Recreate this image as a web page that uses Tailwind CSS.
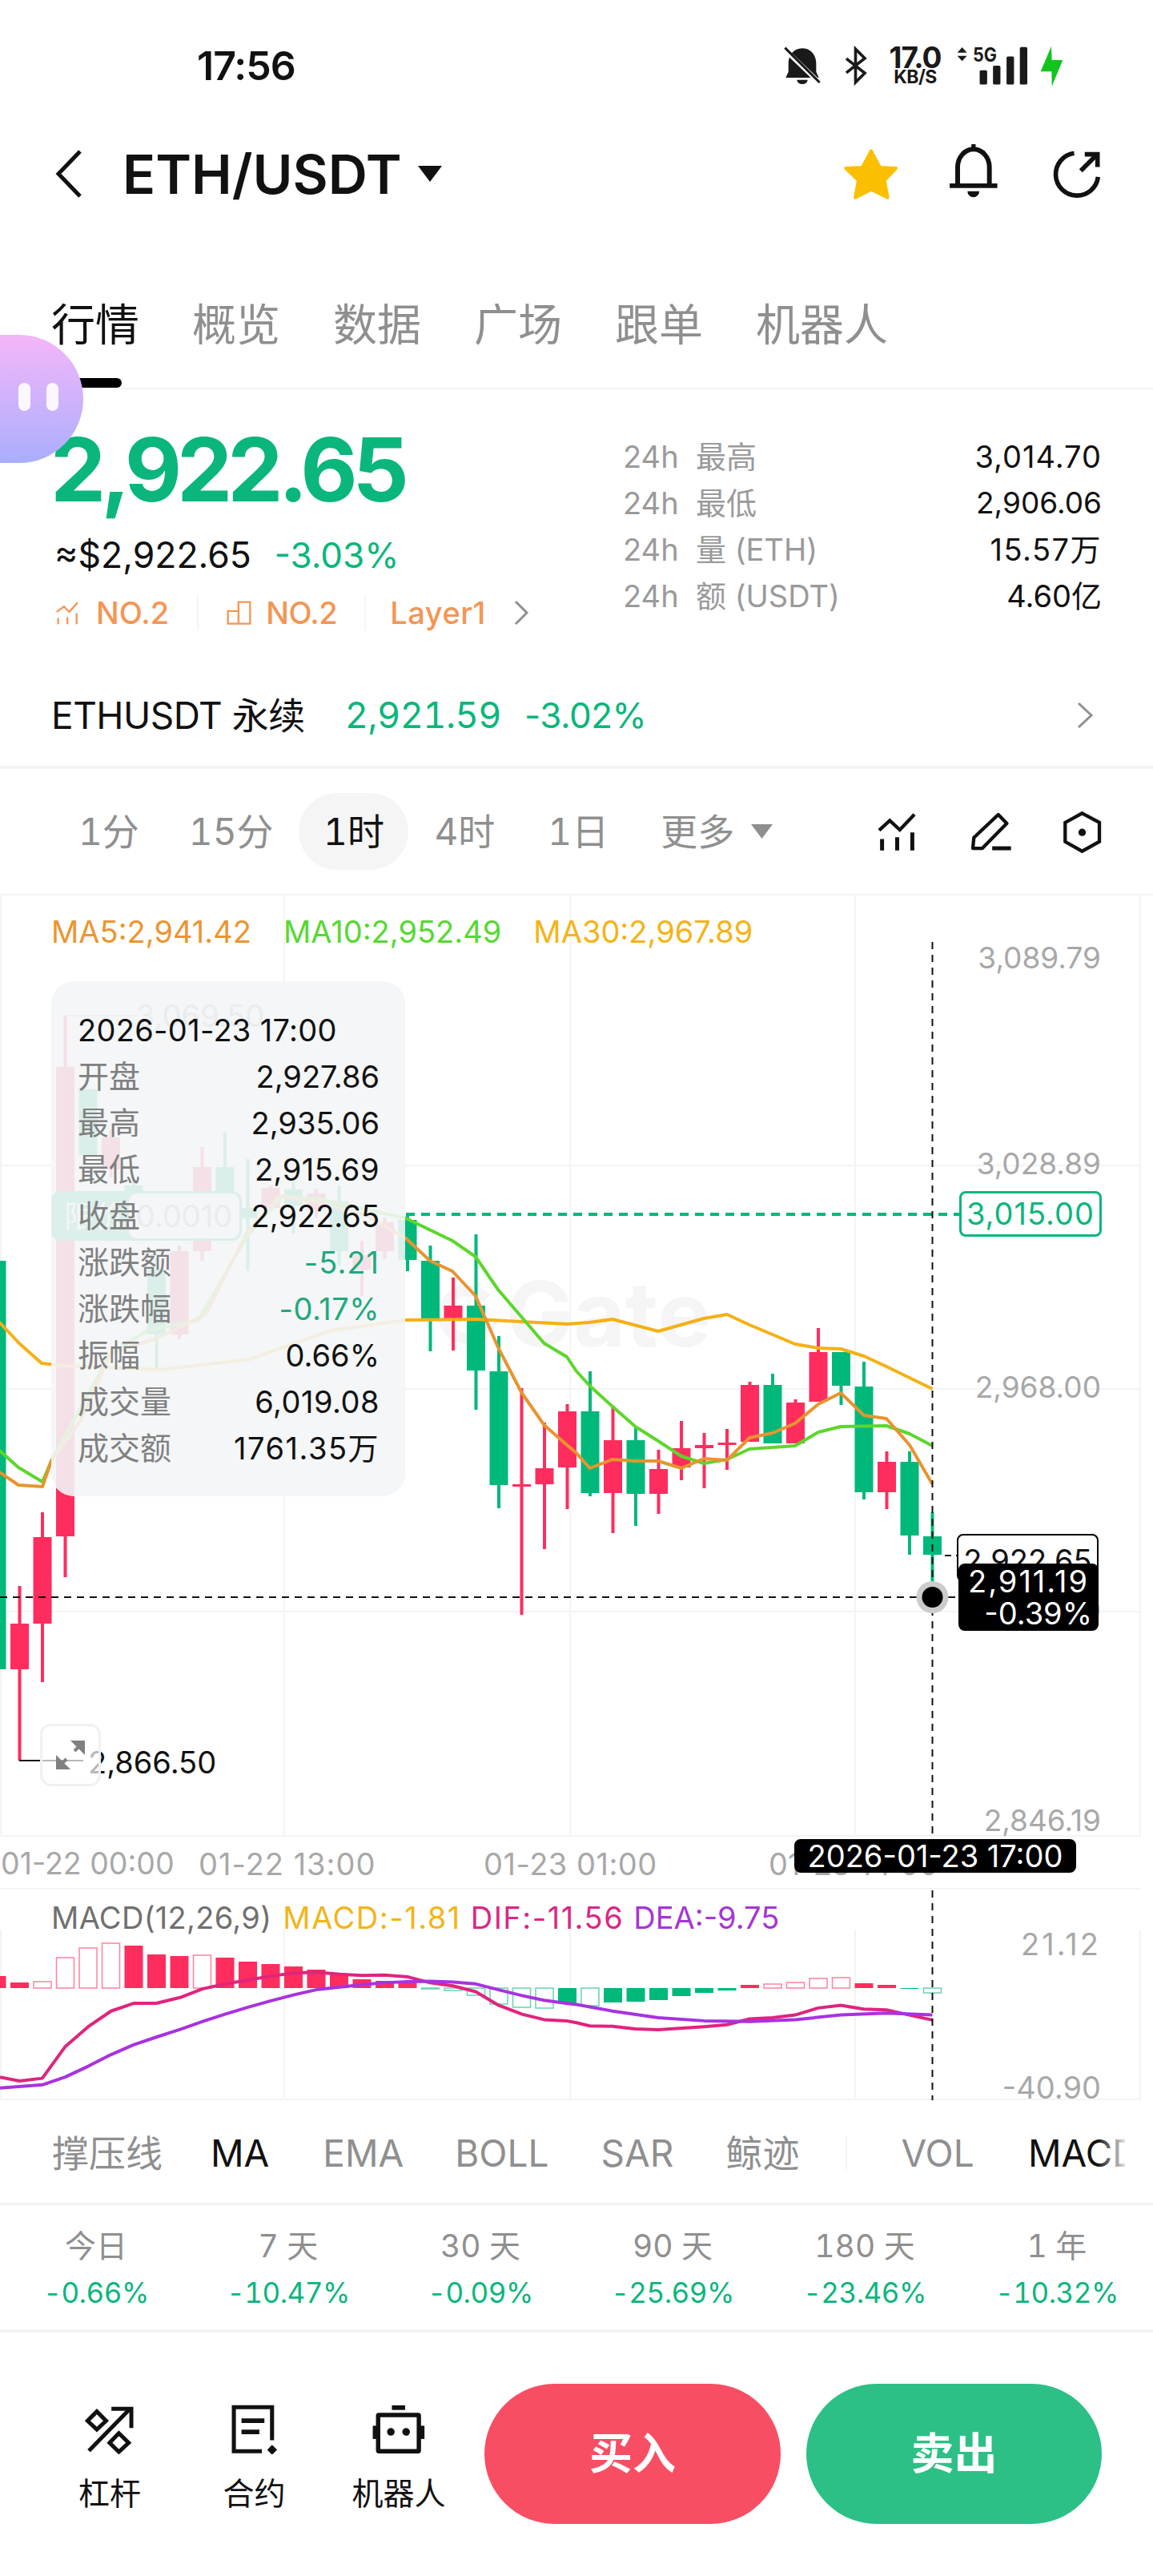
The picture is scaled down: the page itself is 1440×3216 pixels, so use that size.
<!DOCTYPE html>
<html lang="zh-CN">
  <head>
    <meta charset="UTF-8" />
    <title>ETH/USDT</title>
    <script src="https://cdn.jsdelivr.net/npm/@tailwindcss/browser@4"></script>
  </head>
  <body class="bg-white text-black w-[1440px] h-[3216px] overflow-hidden relative font-['Inter','Noto_Sans_CJK_SC',sans-serif]">
    <!-- Status bar -->
    <div class="h-[164px] flex items-center pl-[246px] pr-[112px]">
      <span class="text-[50px] font-semibold leading-none tracking-[-1px] text-[#111]">17:56</span>
      <div class="ml-auto flex items-center">
        <svg width="50" height="50" viewBox="50 50 150 150" fill="#1a1a1a">
          <path d="M125 60c-32 0-52 26-52 56v32l-10 22h124l-10-22v-32c0-30-20-56-52-56z" />
          <path d="M105 178h40a20 16 0 0 1-40 0z" />
          <path d="M55 60L190 190" stroke="#fff" stroke-width="18" />
          <path d="M60 58L190 188" stroke="#1a1a1a" stroke-width="9" />
        </svg>
        <svg class="ml-[25px]" width="33" height="50" viewBox="265 50 100 150" fill="none" stroke="#1a1a1a" stroke-width="11">
          <path d="M280 98L350 153 315 188V62L350 97 280 152" />
        </svg>
        <div class="ml-[25px] w-[66px] flex flex-col items-center text-[#1a1a1a] font-bold">
          <span class="text-[37px] leading-[29px] tracking-[-1px]">17.0</span>
          <span class="text-[23px] leading-[21px] tracking-[-0.5px]">KB/S</span>
        </div>
        <svg class="ml-[17px]" width="93" height="50" viewBox="700 50 280 150" fill="#1a1a1a">
          <path d="M726 56l18 20h-36zM726 108l18-20h-36z" />
          <text x="766" y="110" font-size="72" font-weight="700" textLength="90" lengthAdjust="spacingAndGlyphs">5G</text>
          <rect x="792" y="142" width="28" height="54" rx="5" />
          <rect x="842" y="125" width="28" height="71" rx="5" />
          <rect x="893" y="90" width="28" height="106" rx="5" />
          <rect x="943" y="55" width="28" height="141" rx="5" />
        </svg>
        <svg class="ml-[12px]" width="30" height="52" viewBox="1015 50 90 156" fill="#14c41e">
          <path d="M1060 55L1020 150H1061L1062 205L1103 107H1062Z" />
        </svg>
      </div>
    </div>

    <!-- Header -->
    <div class="h-[106px] flex items-center pl-[68px] pr-[62px]">
      <svg width="36" height="60" viewBox="0 0 36 60" fill="none" stroke="#111" stroke-width="5">
        <path d="M32 2L5 30L32 58" />
      </svg>
      <span class="ml-[49px] text-[68px] font-semibold leading-none text-[#111]">ETH/USDT</span>
      <svg class="ml-[20px]" width="30" height="20" viewBox="0 0 30 20" fill="#111"><path d="M0 0H30L15 20Z" /></svg>
      <div class="ml-auto flex items-center">
        <svg width="70" height="65" viewBox="40 40 210 195" fill="#fcbf00" stroke="#fcbf00" stroke-width="12" stroke-linejoin="round">
          <path d="M145 50L178 112 238 115 195 160 207 225 145 195 85 225 97 160 50 115 112 112Z" />
        </svg>
        <svg class="ml-[62px]" width="63" height="76" viewBox="435 35 190 230">
          <path d="M468 195V125a60 68 0 0 1 120 0V195" fill="none" stroke="#111" stroke-width="18" />
          <path d="M438 195H618" stroke="#111" stroke-width="18" />
          <rect x="520" y="38" width="16" height="20" fill="#111" />
          <path d="M505 216h45a22 22 0 0 1-45 0z" fill="#111" />
        </svg>
        <svg class="ml-[67px]" width="63" height="63" viewBox="820 50 190 190" fill="none" stroke="#111" stroke-width="17">
          <path d="M900 66A80 80 0 1 0 990 155" />
          <path d="M925 132L985 72" />
          <path d="M940 70H988V118" />
        </svg>
      </div>
    </div>

    <!-- Tabs -->
    <div class="relative h-[216px] pt-[108px] pl-[64px] border-b-2 border-[#f3f3f3]">
      <div class="flex gap-[66px] text-[55px] leading-[54px] text-[#8f8f8f]">
        <span class="text-[#111]">行情</span>
        <span>概览</span>
        <span>数据</span>
        <span>广场</span>
        <span>跟单</span>
        <span>机器人</span>
      </div>
      <div class="absolute left-[88px] bottom-0 w-[64px] h-[12px] rounded-full bg-black"></div>
    </div>

    <!-- Floating assistant bubble -->
    <div class="absolute left-0 top-[418px] w-[104px] h-[160px] rounded-r-[80px] bg-gradient-to-b from-[#f4b6f9] to-[#a9aefd] z-20">
      <div class="absolute left-[23px] top-[60px] w-[15px] h-[35px] rounded-full bg-white/90"></div>
      <div class="absolute left-[58px] top-[60px] w-[15px] h-[35px] rounded-full bg-white/90"></div>
    </div>

    <!-- Price summary -->
    <div class="h-[344px] flex">
      <div class="w-[778px] pl-[68px] pt-[44px]">
        <div class="-ml-[5px] text-[110px] font-bold leading-[112px] tracking-[-6px] text-[#0ab67b]">2,922.65</div>
        <div class="mt-[26px] flex items-center h-[50px] text-[44.5px] leading-none">
          <span class="text-[#111]">≈$2,922.65</span>
          <span class="ml-[29px] text-[44px] text-[#0ab67b]">-3.03%</span>
        </div>
        <div class="mt-[22px] flex items-center h-[50px] text-[38px] leading-none font-medium text-[#f59554]">
          <svg width="32" height="33" viewBox="55 20 95 100" fill="none" stroke="#f59554" stroke-width="7">
            <path d="M62 65L90 45 110 65 142 30" />
            <path d="M68 88V112M103 85V112M138 70V112" />
          </svg>
          <span class="ml-[20px]">NO.2</span>
          <span class="ml-[35px] w-[2px] h-[44px] bg-[#f5f5f5]"></span>
          <svg class="ml-[34px]" width="33" height="33" viewBox="685 20 100 100" fill="none" stroke="#f59554" stroke-width="7">
            <path d="M693 62H733V110H693ZM733 28H777V110H733Z" />
          </svg>
          <span class="ml-[17px] tracking-[-0.5px]">NO.2</span>
          <span class="ml-[34px] w-[2px] h-[44px] bg-[#f5f5f5]"></span>
          <span class="ml-[30px] tracking-[0.5px]">Layer1</span>
          <svg class="ml-[35px]" width="18" height="32" viewBox="0 0 18 32" fill="none" stroke="#8f8f8f" stroke-width="3"><path d="M2 2L16 16L2 30" /></svg>
        </div>
      </div>
      <div class="w-[598px] pt-[55px] text-[38px]">
        <div class="flex justify-between h-[58px] items-center"><span class="text-[#9a9a9a]">24h&nbsp; 最高</span><span class="tracking-[1px] text-[#111]">3,014.70</span></div>
        <div class="flex justify-between h-[58px] items-center"><span class="text-[#9a9a9a]">24h&nbsp; 最低</span><span class="text-[37px] text-[#111]">2,906.06</span></div>
        <div class="flex justify-between h-[58px] items-center"><span class="text-[#9a9a9a]">24h&nbsp; 量 (ETH)</span><span class="tracking-[1.5px] text-[#111]">15.57万</span></div>
        <div class="flex justify-between h-[58px] items-center"><span class="text-[#9a9a9a]">24h&nbsp; 额 (USDT)</span><span class="text-[#111]">4.60亿</span></div>
      </div>
    </div>

    <!-- Perpetual link -->
    <div class="h-[130px] flex items-center pl-[64px] pr-[74px] border-b-4 border-[#f3f3f3] text-[45px] tracking-[-0.5px]">
      <span class="text-[46px] text-[#111]">ETHUSDT 永续</span>
      <span class="ml-[50px] tabular-nums text-[#0ab67b]">2,921.59</span>
      <span class="ml-[29px] text-[44px] text-[#0ab67b]">-3.02%</span>
      <svg class="ml-auto" width="22" height="34" viewBox="0 0 22 34" fill="none" stroke="#8f8f8f" stroke-width="3"><path d="M3 2L19 17L3 32" /></svg>
    </div>

    <!-- Timeframes -->
    <div class="h-[158px] flex items-center border-b-2 border-[#f3f3f3] text-[46px] tabular-nums text-[#8f8f8f]">
      <span class="ml-[98px]">1分</span>
      <span class="ml-[62px]">15分</span>
      <span class="ml-[32px] w-[137px] h-[96px] rounded-full bg-[#f5f5f5] text-[#111] flex items-center justify-center">1时</span>
      <span class="ml-[32px]">4时</span>
      <span class="ml-[66px]">1日</span>
      <span class="ml-[65px]">更多</span>
      <svg class="ml-[21px]" width="27" height="18" viewBox="0 0 27 18" fill="#8f8f8f"><path d="M0 0H27L13.5 18Z" /></svg>
      <svg class="ml-auto" width="53" height="55" viewBox="160 95 160 165" fill="none" stroke="#111" stroke-width="13">
        <path d="M172 172L212 135 250 170 305 112" />
        <path d="M183 205V248M240 198V248M297 180V248" stroke-width="15" />
      </svg>
      <svg class="ml-[63px]" width="57" height="53" viewBox="510 90 170 160" fill="none" stroke="#111" stroke-width="13">
        <path d="M620 105L652 138 560 232 524 232 528 192Z" stroke-linejoin="round" />
        <path d="M597 232H668" stroke-width="15" />
      </svg>
      <svg class="ml-[58px] mr-[62px]" width="53" height="57" viewBox="855 90 160 170" fill="none" stroke="#111" stroke-width="13">
        <path d="M935 105L1000 140V212L935 248 871 212V140Z" />
        <circle cx="935" cy="177" r="14" fill="#111" stroke="none" />
      </svg>
    </div>

    <!-- Chart canvas -->
    <div class="relative h-[1504px] overflow-hidden text-[38px]">
      <div class="absolute left-[632px] top-[466px] text-[112px] font-bold leading-none text-[#f5f5f5]">Gate</div>
      <svg id="chart" class="absolute left-0 top-0" width="1440" height="1504" viewBox="0 1118 1440 1504"></svg>

      <div class="absolute left-[64px] top-[22px] flex gap-[40px] leading-[46px]">
        <span class="text-[#ec9530]">MA5:2,941.42</span>
        <span class="text-[#57d832]">MA10:2,952.49</span>
        <span class="text-[#f5b316]">MA30:2,967.89</span>
      </div>

      <!-- Price scale -->
      <div class="absolute right-[65px] top-[55px] text-[37px] leading-[46px] text-[#a8a8a8]">3,089.79</div>
      <div class="absolute right-[65px] top-[312px] text-[37px] leading-[46px] text-[#a8a8a8]">3,028.89</div>
      <div class="absolute right-[65px] top-[591px] text-[37px] leading-[46px] text-[#a8a8a8]">2,968.00</div>
      <div class="absolute right-[65px] top-[869px] text-[37px] leading-[46px] text-[#a8a8a8]">2,907.10</div>
      <div class="absolute right-[65px] top-[1132px] text-[37px] leading-[46px] text-[#a8a8a8]">2,846.19</div>
      <div class="absolute right-[65px] top-[1286px] tracking-[3px] leading-[46px] text-[#a8a8a8]">21.12</div>
      <div class="absolute right-[65px] top-[1465px] leading-[46px] text-[#a8a8a8]">-40.90</div>

      <!-- Time scale -->
      <div class="absolute left-[1px] top-[1186px] text-[37.5px] leading-[46px] text-[#a8a8a8]">01-22 00:00</div>
      <div class="absolute left-[248px] top-[1186px] tracking-[1px] leading-[46px] text-[#a8a8a8]">01-22 13:00</div>
      <div class="absolute left-[604px] top-[1186px] tracking-[0.5px] leading-[46px] text-[#a8a8a8]">01-23 01:00</div>
      <div class="absolute left-[960px] top-[1186px] leading-[46px] text-[#a8a8a8]">01-23 14:00</div>

      <div class="absolute left-[64px] top-[1253px] flex leading-[46px]">
        <span class="tracking-[0.3px] text-[#707070]">MACD(12,26,9)</span>
        <span class="ml-[14px] tracking-[1.5px] text-[#f3b416]">MACD:-1.81</span>
        <span class="ml-[12px] tracking-[1.5px] text-[#dc2685]">DIF:-11.56</span>
        <span class="ml-[12px] text-[#a535d6]">DEA:-9.75</span>
      </div>

      <!-- Markers behind the tooltip -->
      <div class="absolute left-[170px] top-[127px] leading-[46px] text-[#999]">3,069.50</div>
      <div class="absolute left-[64px] top-[369px] w-[238px] h-[62px] rounded-[12px] bg-[#0ab67b] flex justify-between items-center">
        <span class="ml-[16px] text-white">限价</span>
        <div class="w-[138px] h-[56px] mr-[3px] rounded-[10px] bg-white text-[#999] flex items-center justify-center">0.0010</div>
      </div>

      <!-- Low marker -->
      <div class="absolute left-[110px] top-[1059px] leading-[46px] text-[#111]">2,866.50</div>
      <div class="absolute left-[50px] top-[1034px] w-[76px] h-[78px] rounded-[14px] border-[3px] border-[#f1f1f1] bg-white/70 flex items-center justify-center">
        <svg width="38" height="38" viewBox="0 0 38 38" fill="#808080">
          <path d="M37 1V19L19 1Z" />
          <path d="M1 37V19L19 37Z" />
          <path d="M24 14L29 9M9 29L14 24" stroke="#808080" stroke-width="4" />
        </svg>
      </div>

      <!-- OHLC tooltip -->
      <div class="absolute left-[64px] top-[107px] w-[442px] pl-[33px] pr-[32px] pt-[32px] pb-[31px] rounded-[28px] bg-[#f3f5f6]/90 z-10">
        <div class="h-[58px] flex items-center tracking-[0.3px] text-[#111]">2026-01-23 17:00</div>
        <div class="h-[58px] flex items-center justify-between"><span class="text-[39px] text-[#808080]">开盘</span><span class="text-[#111]">2,927.86</span></div>
        <div class="h-[58px] flex items-center justify-between"><span class="text-[39px] text-[#808080]">最高</span><span class="text-[#111]">2,935.06</span></div>
        <div class="h-[58px] flex items-center justify-between"><span class="text-[39px] text-[#808080]">最低</span><span class="tracking-[0.5px] text-[#111]">2,915.69</span></div>
        <div class="h-[58px] flex items-center justify-between"><span class="text-[39px] text-[#808080]">收盘</span><span class="text-[#111]">2,922.65</span></div>
        <div class="h-[58px] flex items-center justify-between"><span class="text-[39px] text-[#808080]">涨跌额</span><span class="tracking-[1px] text-[#1fa97d]">-5.21</span></div>
        <div class="h-[58px] flex items-center justify-between"><span class="text-[39px] text-[#808080]">涨跌幅</span><span class="tracking-[0.5px] text-[#1fa97d]">-0.17%</span></div>
        <div class="h-[58px] flex items-center justify-between"><span class="text-[39px] text-[#808080]">振幅</span><span class="text-[#111]">0.66%</span></div>
        <div class="h-[58px] flex items-center justify-between"><span class="text-[39px] text-[#808080]">成交量</span><span class="tracking-[0.5px] text-[#111]">6,019.08</span></div>
        <div class="h-[58px] flex items-center justify-between"><span class="text-[39px] text-[#808080]">成交额</span><span class="tracking-[1.5px] text-[#111]">1761.35万</span></div>
      </div>

      <!-- Price tags -->
      <div class="absolute left-[1198px] top-[369px] w-[178px] h-[57px] rounded-[8px] border-[3px] border-[#0ab67b] bg-white tracking-[1px] text-[#0ab67b] flex items-center justify-center">3,015.00</div>
      <div class="absolute left-[1195px] top-[797px] w-[177px] h-[60px] rounded-[8px] border-2 border-black bg-white text-[#111] flex items-center justify-center pt-[6px]">2,922.65</div>
      <div class="absolute left-[1197px] top-[834px] w-[175px] h-[84px] rounded-[8px] bg-black text-white flex flex-col items-end justify-center pr-[8px] leading-[40px]">
        <span class="mr-[4px] tracking-[2px]">2,911.19</span>
        <span>-0.39%</span>
      </div>
      <div class="absolute left-[992px] top-[1178px] w-[352px] h-[42px] rounded-[8px] bg-black text-white flex items-center justify-center whitespace-nowrap leading-none">2026-01-23 17:00</div>
    </div>

    <!-- Indicators -->
    <div class="relative h-[131px] pt-[4px] flex items-center border-b-[3px] border-[#f3f3f3] text-[46px] text-[#8f8f8f]">
      <span class="ml-[65px]">撑压线</span>
      <span class="ml-[60px] text-[#111]">MA</span>
      <span class="ml-[67px]">EMA</span>
      <span class="ml-[64px]">BOLL</span>
      <span class="ml-[65px]">SAR</span>
      <span class="ml-[65px]">鲸迹</span>
      <span class="ml-[58px] w-[2px] h-[44px] bg-[#f3f3f3]"></span>
      <span class="ml-[67px]">VOL</span>
      <div class="absolute left-[1284px] top-[32px] w-[121px] overflow-hidden whitespace-nowrap text-[#111]">MACD</div>
      <div class="absolute left-[1370px] top-[30px] w-[40px] h-[70px] bg-gradient-to-r from-white/0 to-white"></div>
    </div>

    <!-- Period returns -->
    <div class="h-[159px] grid grid-cols-6 border-b-4 border-[#f3f3f3] text-center pt-[22px] leading-[58px] tabular-nums">
      <div><div class="text-[39px] text-[#8f8f8f]">今日</div><div class="text-[35px] tracking-[-0.5px] text-[#0ab67b]">-0.66%</div></div>
      <div><div class="text-[39px] text-[#8f8f8f]">7 天</div><div class="text-[35px] tracking-[-0.5px] text-[#0ab67b]">-10.47%</div></div>
      <div><div class="text-[39px] text-[#8f8f8f]">30 天</div><div class="text-[35px] tracking-[-0.5px] text-[#0ab67b]">-0.09%</div></div>
      <div><div class="text-[39px] text-[#8f8f8f]">90 天</div><div class="text-[35px] tracking-[-0.5px] text-[#0ab67b]">-25.69%</div></div>
      <div><div class="text-[39px] text-[#8f8f8f]">180 天</div><div class="text-[35px] tracking-[-0.5px] text-[#0ab67b]">-23.46%</div></div>
      <div><div class="text-[39px] text-[#8f8f8f]">1 年</div><div class="text-[35px] tracking-[-0.5px] text-[#0ab67b]">-10.32%</div></div>
    </div>

    <!-- Footer actions -->
    <div class="flex pl-[47px] pt-[64px]">
      <div class="w-[180px] pt-[26px] flex flex-col items-center text-[39px] text-[#111]">
        <svg width="63" height="62" viewBox="75 35 190 185" fill="none" stroke="#111" stroke-width="15">
          <path d="M120 60L155 95 120 128 85 95Z" />
          <path d="M203 142L240 178 203 212 168 178Z" />
          <path d="M90 208L245 50" />
          <path d="M175 50H250V122" />
        </svg>
        <span class="mt-[24px] leading-[50px]">杠杆</span>
      </div>
      <div class="w-[181px] pt-[26px] flex flex-col items-center text-[39px] text-[#111]">
        <svg width="63" height="62" viewBox="620 25 190 195" fill="none" stroke="#111" stroke-width="16">
          <path d="M785 165V35H635V208H745" />
          <path d="M665 88H755M665 132H735" stroke-width="18" />
          <path d="M785 183L805 203 785 222 766 203Z" fill="#111" stroke="none" />
        </svg>
        <span class="mt-[24px] leading-[50px]">合约</span>
      </div>
      <div class="w-[180px] pt-[26px] flex flex-col items-center text-[39px] text-[#111]">
        <svg width="70" height="62" viewBox="1150 25 210 195" fill="#111">
          <rect x="1228" y="28" width="52" height="18" />
          <rect x="1174" y="66" width="160" height="142" rx="3" fill="none" stroke="#111" stroke-width="17" />
          <rect x="1153" y="108" width="18" height="52" />
          <rect x="1338" y="108" width="18" height="52" />
          <circle cx="1224" cy="132" r="15" />
          <circle cx="1284" cy="132" r="15" />
        </svg>
        <span class="mt-[24px] leading-[50px]">机器人</span>
      </div>
      <div class="ml-[17px] w-[370px] h-[175px] rounded-full bg-[#f84e64] text-white text-[54px] font-bold flex items-center justify-center">买入</div>
      <div class="ml-[32px] w-[369px] h-[175px] rounded-full bg-[#2cc086] text-white text-[54px] font-bold flex items-center justify-center">卖出</div>
    </div>

    <script>
      const RED = "#ff2d5e";
      const GREEN = "#00b87a";
      const STEP = 28.5;
      const X0 = -4;

      // [r|g, bodyTop, bodyBottom, wickTop, wickBottom] left to right
      const candles = [
        ["g",1574,2084,1574,2084],["r",2027,2084,1980,2198],["r",1919,2027,1888,2100],["r",1332,1918,1268,1969],
        ["g",1360,1442,1360,1442],["r",1420,1460,1410,1470],["g",1480,1510,1475,1525],["g",1585,1666,1570,1710],
        ["r",1562,1666,1555,1672],["r",1457,1562,1432,1574],["g",1457,1488,1414,1503],["g",1508,1521,1447,1587],
        ["r",1483,1508,1480,1512],["g",1485,1505,1475,1540],["r",1490,1510,1484,1520],["g",1500,1562,1480,1580],
        ["r",1567,1585,1549,1618],["r",1526,1562,1520,1572],["g",1523,1573,1516,1587],["g",1574,1647,1555,1687],
        ["r",1630,1647,1595,1686],["g",1630,1711,1541,1760],["g",1712,1854,1668,1883],["r",1853,1856,1733,2016],
        ["r",1833,1853,1776,1934],["r",1762,1832,1753,1884],["g",1762,1864,1712,1868],["r",1798,1864,1755,1914],
        ["g",1798,1865,1783,1905],["r",1834,1865,1810,1890],["r",1808,1832,1774,1848],["r",1804,1808,1789,1858],
        ["r",1801,1804,1784,1835],["r",1729,1800,1725,1800],["g",1729,1802,1715,1802],["r",1751,1802,1747,1802],
        ["r",1688,1750,1658,1750],["g",1688,1730,1688,1754],["g",1731,1863,1700,1872],["r",1825,1863,1812,1884],
        ["g",1825,1917,1812,1941],["g",1918,1941,1888,1975],
      ];

      const ma30 = [[-10,1641],[24,1677],[52,1702],[81,1705],[200,1710],[312,1697],[413,1661],[507,1648],[594,1647],[708,1653],[736,1651],[765,1647],[822,1662],[879,1646],[908,1641],[936,1654],[993,1678],[1022,1683],[1050,1684],[1079,1693],[1107,1706],[1164.5,1734]];
      const ma10 = [[-5,1807],[23,1832],[53,1850],[64,1824],[138,1690],[184,1661],[248,1648],[308,1544],[353,1493],[404,1498],[507,1521],[565,1549],[594,1569],[622,1610],[679.5,1677],[708,1694],[720,1712],[736.5,1730],[765,1756],[793.5,1781],[822,1799],[851,1818],[879,1827],[908,1822],[936,1809],[993,1805],[1022,1788],[1050,1781],[1107,1780],[1136,1790],[1164.5,1805]];
      const ma5 = [[-5,1835],[23,1854],[53,1856],[64,1824],[101,1773],[138,1690],[197,1670],[257,1641],[308,1539],[349,1493],[404,1503],[459,1518],[507,1546],[537,1574],[565,1587],[594,1618],[622,1682],[651,1738],[679.5,1779],[708,1804],[720,1814],[736.5,1833],[765,1822],[793.5,1824],[822,1824],[851,1833],[879,1821],[908,1823],[936,1795],[965,1789],[993,1777],[1022,1753],[1050,1739],[1079,1767],[1107,1771],[1136,1804],[1164.5,1853]];

      // [kind, y]: s solid, h hollow; colour by side of the zero line
      const macdZero = 2482;
      const macd = [
        ["s",2467],["s",2475],["h",2474],["h",2444],["h",2432],["h",2426],["s",2429],["s",2440],["s",2442],["h",2441],
        ["s",2444],["s",2449],["s",2452],["s",2455],["s",2459],["s",2465],["s",2471],["s",2473],["s",2473],["h",2483],
        ["h",2485],["h",2491],["h",2502],["h",2506],["h",2507],["s",2501],["h",2504],["s",2500],["s",2499],["s",2497],
        ["s",2492],["s",2488],["s",2485],["s",2478],["h",2477],["h",2475],["h",2470],["h",2469],["s",2476],["s",2478],
        ["s",2483],["h",2488],
      ];

      const left = (v, y) => [v / 2.178, 1900 + y / 2.063];
      const right = (v, y) => [720 + v / 2.178, 1900 + y / 2.063];
      const dif = [[0,1430],[53,1440],[115,1433],[177,1352],[240,1300],[302,1260],[363,1240],[425,1240],[490,1225],[550,1203],[612,1190],[675,1180],[735,1170],[800,1162],[860,1160],[925,1165],[985,1168],[1045,1167],[1110,1172],[1170,1187],[1232,1195],[1294,1210],[1356,1245],[1420,1268],[1480,1282],[1540,1285]].map((p) => left(...p))
        .concat([[0,1290],[36,1298],[98,1299],[160,1306],[222,1308],[347,1300],[409,1295],[471,1280],[533,1277],[595,1270],[657,1252],[719,1245],[781,1255],[843,1257],[905,1270],[968,1283]].map((p) => right(...p)));
      const dea = [[0,1458],[115,1450],[177,1430],[240,1402],[302,1372],[363,1347],[425,1327],[490,1307],[550,1287],[612,1268],[675,1250],[735,1234],[800,1218],[860,1205],[925,1198],[985,1192],[1045,1187],[1110,1184],[1170,1183],[1232,1185],[1294,1190],[1356,1205],[1420,1220],[1480,1232],[1540,1240]].map((p) => left(...p))
        .concat([[0,1243],[98,1260],[222,1277],[347,1285],[471,1287],[595,1282],[719,1270],[843,1265],[968,1270]].map((p) => right(...p)));

      const line = (pts, color, w = 4) =>
        `<polyline points="${pts.map((p) => p.join(",")).join(" ")}" fill="none" stroke="${color}" stroke-width="${w}" stroke-linejoin="round" />`;

      // watermark logo mark
      let out = `<path d="M607 1622A30 30 0 1 0 612 1652H590" fill="none" stroke="#f5f5f5" stroke-width="14" />`;

      // grid
      const GRID = "#f4f4f4";
      [1455, 1734, 2012, 2292, 2358, 2621].forEach((y) => {
        out += `<rect x="0" y="${y - 1}" width="1424" height="2" fill="${GRID}" />`;
      });
      [1, 355, 712, 1068, 1424].forEach((x) => {
        out += `<rect x="${x - 1}" y="1118" width="2" height="1174" fill="${GRID}" />`;
        out += `<rect x="${x - 1}" y="2409" width="2" height="213" fill="${GRID}" />`;
      });

      // candles
      candles.forEach((c, i) => {
        const x = X0 + STEP * i;
        const color = c[0] === "r" ? RED : GREEN;
        out += `<rect x="${x - 2}" y="${c[3]}" width="4" height="${c[4] - c[3]}" fill="${color}" />`;
        out += `<rect x="${x - 11.5}" y="${c[1]}" width="23" height="${Math.max(c[2] - c[1], 3)}" fill="${color}" />`;
      });

      out += line(ma30, "#f5b014");
      out += line(ma10, "#5dd62c");
      out += line(ma5, "#e8942f");

      // macd histogram
      macd.forEach((m, i) => {
        const x = X0 + STEP * i;
        const up = m[1] < macdZero;
        const top = up ? m[1] : macdZero;
        const h = up ? macdZero - m[1] : m[1] - macdZero;
        const color = up ? RED : GREEN;
        out += m[0] === "s"
          ? `<rect x="${x - 11.5}" y="${top}" width="23" height="${h}" fill="${color}" />`
          : `<rect x="${x - 11}" y="${top}" width="22" height="${h}" fill="#fff" stroke="${color}" stroke-opacity="0.6" stroke-width="1.5" />`;
      });
      out += line(dif, "#e0247c");
      out += line(dea, "#a832e0");

      // last-price and low markers
      out += `<path d="M507 1516H1198" stroke="${GREEN}" stroke-width="4" stroke-dasharray="11 8" />`;
      out += `<path d="M1180 1942H1195" stroke="#111" stroke-width="2" stroke-dasharray="8 6" />`;
      out += `<path d="M24 2198H104" stroke="#111" stroke-width="2" />`;
      out += `<path d="M81 1268H170" stroke="#bbb" stroke-width="2" />`;

      // crosshair
      out += `<path d="M1164.5 1176V2292M1164.5 2360V2622" stroke="#111" stroke-width="2" stroke-dasharray="9 7" />`;
      out += `<path d="M0 1994H1196" stroke="#111" stroke-width="2" stroke-dasharray="9 7" />`;
      out += `<circle cx="1164.5" cy="1994" r="20" fill="#ccc" /><circle cx="1164.5" cy="1994" r="13" fill="#000" />`;

      document.getElementById("chart").innerHTML = out;
    </script>
  </body>
</html>
